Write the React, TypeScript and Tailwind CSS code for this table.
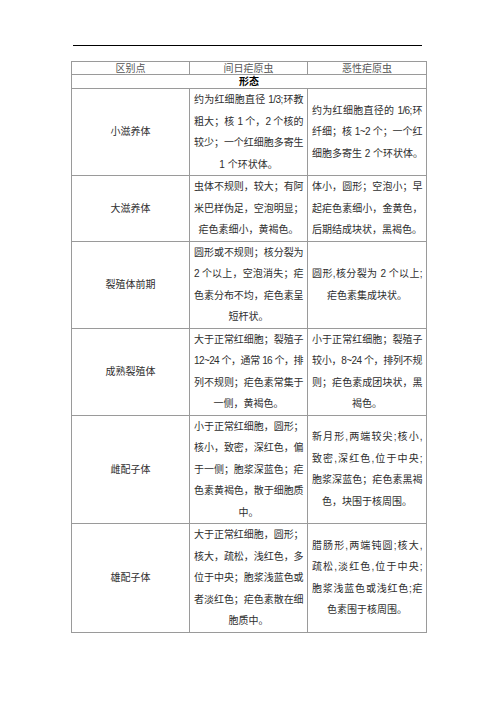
import React from "react";

type Row = { label: string; a: string[]; b: string[] };

const rows: Row[] = [
  {
    label: "小滋养体",
    a: ["约为红细胞直径 1/3;环教", "粗大；核 1 个，2 个核的", "较少；一个红细胞多寄生", "1 个环状体。"],
    b: ["约为红细胞直径的 1/6;环", "纤细；核 1~2 个；一个红", "细胞多寄生 2 个环状体。"],
  },
  {
    label: "大滋养体",
    a: ["虫体不规则，较大；有阿", "米巴样伪足，空泡明显；", "疟色素细小，黄褐色。"],
    b: ["体小，圆形；空泡小；早", "起疟色素细小，金黄色，", "后期结成块状，黑褐色。"],
  },
  {
    label: "裂殖体前期",
    a: ["圆形或不规则；核分裂为", "2 个以上，空泡消失；疟", "色素分布不均，疟色素呈", "短杆状。"],
    b: ["圆形,核分裂为 2 个以上;", "疟色素集成块状。"],
  },
  {
    label: "成熟裂殖体",
    a: ["大于正常红细胞；裂殖子", "12~24 个，通常 16 个，排", "列不规则；疟色素常集于", "一侧，黄褐色。"],
    b: ["小于正常红细胞；裂殖子", "较小，8~24 个，排列不规", "则；疟色素成团块状，黑", "褐色。"],
  },
  {
    label: "雌配子体",
    a: ["小于正常红细胞，圆形；", "核小，致密，深红色，偏", "于一侧；胞浆深蓝色；疟", "色素黄褐色，散于细胞质", "中。"],
    b: ["新月形,两端较尖;核小,", "致密,深红色,位于中央;", "胞浆深蓝色；疟色素黑褐", "色，块围于核周围。"],
  },
  {
    label: "雄配子体",
    a: ["大于正常红细胞，圆形；", "核大，疏松，浅红色，多", "位于中央；胞浆浅蓝色或", "者淡红色；疟色素散在细", "胞质中。"],
    b: ["腊肠形,两端钝圆;核大,", "疏松,淡红色,位于中央;", "胞浆浅蓝色或浅红色;疟", "色素围于核周围。"],
  },
];

function Lines({ lines }: { lines: string[] }) {
  return (
    <div>
      {lines.map((l, i) =>
        i < lines.length - 1 ? (
          <div key={i} className="whitespace-nowrap text-justify [text-align-last:justify] tracking-[-0.6px]">
            {l}
          </div>
        ) : (
          <div key={i} className="whitespace-nowrap text-center">
            {l}
          </div>
        )
      )}
    </div>
  );
}

export default function App() {
  const font = "font-['Liberation_Sans','Noto_Sans_CJK_SC',sans-serif]";
  return (
    <div className={`w-[496px] h-[702px] bg-white text-[#2e2e2e] ${font}`}>
      <div className="pt-[45px] pl-[71px]">
        <div className="ml-[2px] w-[349px] h-px bg-black" />
        <table className="mt-[15px] w-[355px] table-fixed border-collapse border border-[#9a9a9a] text-[10px]">
          <colgroup>
            <col className="w-[118px]" />
            <col className="w-[118px]" />
            <col className="w-[119px]" />
          </colgroup>
          <tbody>
            <tr>
              <td className="h-[13px] border border-[#9a9a9a] p-0 text-center leading-[11px] text-[#555]">区别点</td>
              <td className="h-[13px] border border-[#9a9a9a] p-0 text-center leading-[11px] text-[#555]">间日疟原虫</td>
              <td className="h-[13px] border border-[#9a9a9a] p-0 text-center leading-[11px] text-[#555]">恶性疟原虫</td>
            </tr>
            <tr>
              <td colSpan={3} className="h-[14px] border border-[#9a9a9a] p-0 text-center font-bold leading-[13px] text-black">
                形态
              </td>
            </tr>
            {rows.map((r) => (
              <tr key={r.label}>
                <td className="border border-[#9a9a9a] p-0 text-center align-middle leading-[21.5px]">{r.label}</td>
                <td className="border border-[#9a9a9a] px-[4px] py-0 align-middle leading-[21.5px]">
                  <Lines lines={r.a} />
                </td>
                <td className="border border-[#9a9a9a] px-[4px] py-0 align-middle leading-[21.5px]">
                  <Lines lines={r.b} />
                </td>
              </tr>
            ))}
          </tbody>
        </table>
      </div>
    </div>
  );
}
